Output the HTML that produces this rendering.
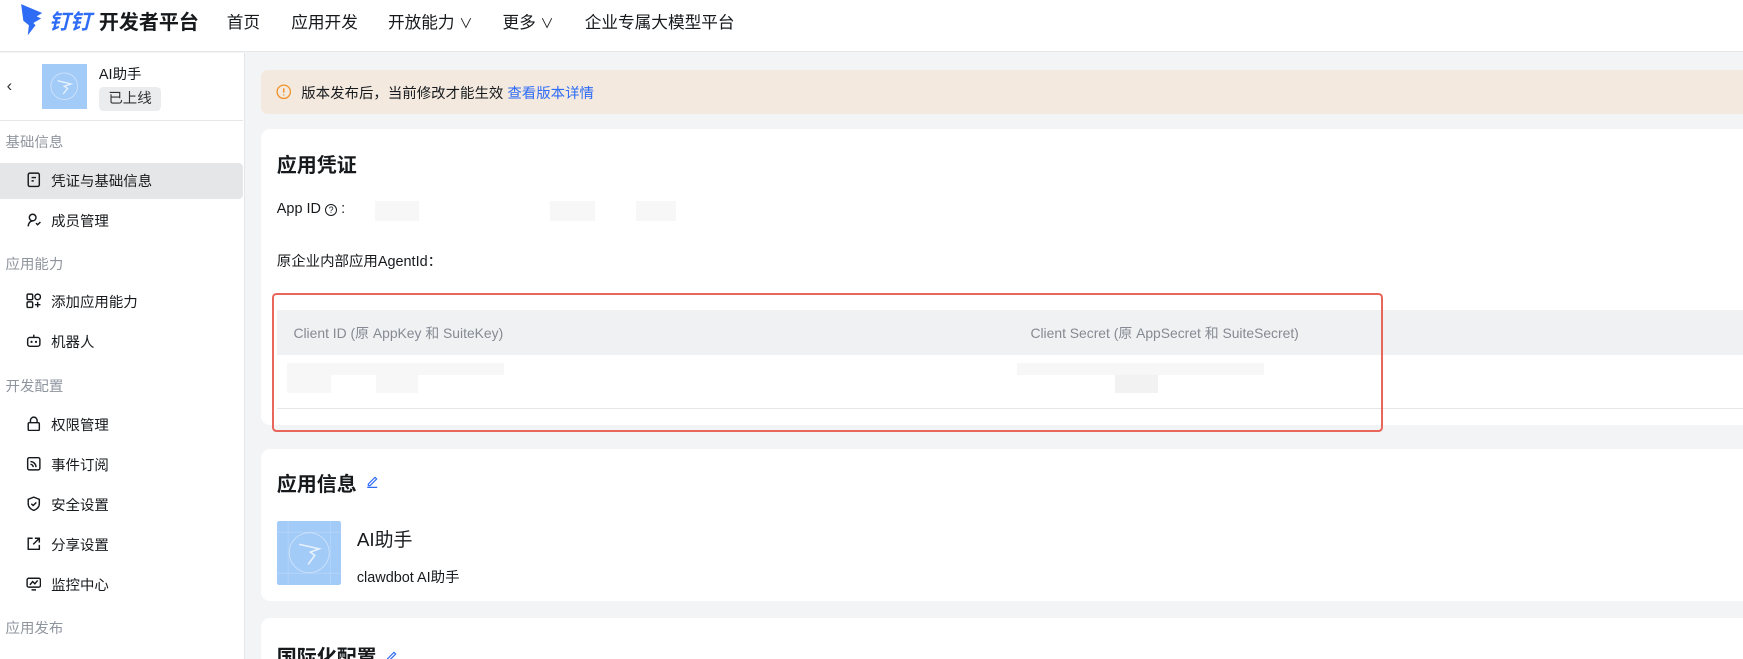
<!DOCTYPE html>
<html><head><meta charset="utf-8"><style>
*{box-sizing:border-box;margin:0;padding:0}
html,body{width:1743px;height:659px;overflow:hidden;background:#f3f4f6}
#w{width:1568px;height:593px;zoom:1.1116;position:relative;font-family:"Liberation Sans","Noto Sans CJK SC",sans-serif;color:#171a1d;overflow:hidden}
.a{position:absolute;white-space:nowrap}
#hd{left:0;top:0;width:1568px;height:47px;background:#fff;border-bottom:1px solid #e5e6e8}
.nav{font-size:15px;top:8px;color:#171a1d}
#sb{left:0;top:48px;width:220px;height:545px;background:#fff;border-right:1px solid #e5e6e8}
.sec{left:5px;font-size:13px;color:#8f959e}
.it{left:46px;font-size:13px;color:#171a1d}
.ic{left:23px;width:14px;height:14px}
.card{background:#fff;border-radius:8px;left:235px;width:1340px}
.blk{background:#f7f7f8}
</style></head><body><div id="w">
<div id="hd" class="a">
<svg class="a" style="left:18px;top:3px" width="22" height="30" viewBox="0 0 22 30"><path d="M1 1 L20 9 L15 12 L19 14 L12 18 L14 20 L7 29 L8 20 L3 16 Z" fill="#2f6cf6"/></svg>
<div class="a" style="left:44px;top:5px;font-size:19px;font-weight:bold;color:#2f6cf6;font-style:italic">钉钉</div>
<div class="a" style="left:89px;top:5px;font-size:18px;font-weight:bold">开发者平台</div>
<div class="a nav" style="left:204px">首页</div>
<div class="a nav" style="left:262px">应用开发</div>
<div class="a nav" style="left:349px">开放能力 <span style="font-size:12px">∨</span></div>
<div class="a nav" style="left:452px">更多 <span style="font-size:12px">∨</span></div>
<div class="a nav" style="left:526px">企业专属大模型平台</div>
</div>
<div id="sb" class="a">
<div class="a" style="left:6px;top:20px;font-size:15px;color:#333">‹</div>
<div class="a" style="left:38px;top:10px;width:40px;height:40px;background:#a3cbf7"><svg width="40" height="40"><circle cx="20" cy="20" r="12" fill="none" stroke="#cfe3fb" stroke-width="0.8"/><path d="M14 15 L26 18 L20 20 L23 22 L19 27" fill="none" stroke="#e8f2fd" stroke-width="1.2"/></svg></div>
<div class="a" style="left:89px;top:9px;font-size:13px">AI助手</div>
<div class="a" style="left:89px;top:30px;width:56px;height:22px;background:#ebecee;border-radius:4px;font-size:13px;line-height:22px;text-align:center;color:#333">已上线</div>
<div class="a" style="left:0;top:60px;width:219px;height:1px;background:#e5e6e8"></div>
<div class="a sec" style="top:70px">基础信息</div>
<div class="a" style="left:0;top:99px;width:219px;height:32px;background:#e5e6e8;border-radius:0 4px 4px 0"></div>
<svg class="a ic" style="top:107px" viewBox="0 0 14 14"><rect x="2" y="1" width="10" height="12" rx="1.5" fill="none" stroke="#171a1d" stroke-width="1.3"/><path d="M5 5h4M5 8h2" stroke="#171a1d" stroke-width="1.3"/></svg>
<div class="a it" style="top:105px">凭证与基础信息</div>
<svg class="a ic" style="top:143px" viewBox="0 0 14 14"><circle cx="6" cy="5" r="3" fill="none" stroke="#171a1d" stroke-width="1.3"/><path d="M2 13c0-3 2-5 4-5M9 10l1.5 1.5L13 9" fill="none" stroke="#171a1d" stroke-width="1.3"/></svg>
<div class="a it" style="top:141px">成员管理</div>
<div class="a sec" style="top:180px">应用能力</div>
<svg class="a ic" style="top:216px" viewBox="0 0 14 14"><rect x="1" y="1" width="5" height="5" rx="1" fill="none" stroke="#171a1d" stroke-width="1.3"/><rect x="8" y="1" width="5" height="5" rx="2.5" fill="none" stroke="#171a1d" stroke-width="1.3"/><rect x="1" y="8" width="5" height="5" rx="1" fill="none" stroke="#171a1d" stroke-width="1.3"/><path d="M10.5 8v5M8 10.5h5" stroke="#171a1d" stroke-width="1.3"/></svg>
<div class="a it" style="top:214px">添加应用能力</div>
<svg class="a ic" style="top:252px" viewBox="0 0 14 14"><rect x="1.5" y="4" width="11" height="8" rx="2" fill="none" stroke="#171a1d" stroke-width="1.3"/><path d="M7 4V1.5" stroke="#171a1d" stroke-width="1.3"/><circle cx="5" cy="8" r="1" fill="#171a1d"/><circle cx="9" cy="8" r="1" fill="#171a1d"/></svg>
<div class="a it" style="top:250px">机器人</div>
<div class="a sec" style="top:289px">开发配置</div>
<svg class="a ic" style="top:326px" viewBox="0 0 14 14"><rect x="2" y="6" width="10" height="7" rx="1" fill="none" stroke="#171a1d" stroke-width="1.3"/><path d="M4 6V4a3 3 0 0 1 6 0v2" fill="none" stroke="#171a1d" stroke-width="1.3"/></svg>
<div class="a it" style="top:324px">权限管理</div>
<svg class="a ic" style="top:362px" viewBox="0 0 14 14"><rect x="1.5" y="1.5" width="11" height="11" rx="1.5" fill="none" stroke="#171a1d" stroke-width="1.3"/><path d="M4 5a5 5 0 0 1 5 5M4 7.5a2.5 2.5 0 0 1 2.5 2.5" fill="none" stroke="#171a1d" stroke-width="1.3"/></svg>
<div class="a it" style="top:360px">事件订阅</div>
<svg class="a ic" style="top:398px" viewBox="0 0 14 14"><path d="M7 1L12 3v4c0 3-2.5 5-5 6-2.5-1-5-3-5-6V3z" fill="none" stroke="#171a1d" stroke-width="1.3"/><path d="M4.8 7l1.6 1.6L9.3 5.8" fill="none" stroke="#171a1d" stroke-width="1.3"/></svg>
<div class="a it" style="top:396px">安全设置</div>
<svg class="a ic" style="top:434px" viewBox="0 0 14 14"><path d="M6 2H2v10h10V8M8 2h4v4M12 2L6.5 7.5" fill="none" stroke="#171a1d" stroke-width="1.3"/></svg>
<div class="a it" style="top:432px">分享设置</div>
<svg class="a ic" style="top:470px" viewBox="0 0 14 14"><rect x="1" y="2" width="12" height="8" rx="1.5" fill="none" stroke="#171a1d" stroke-width="1.3"/><path d="M3.5 8l2.5-3 2 2 2.5-3M5 12.5h4" fill="none" stroke="#171a1d" stroke-width="1.3"/></svg>
<div class="a it" style="top:468px">监控中心</div>
<div class="a sec" style="top:507px">应用发布</div>
</div>
<div class="a" style="left:235px;top:63px;width:1340px;height:40px;background:#f3e9df;border-radius:6px"></div>
<svg class="a" style="left:248px;top:76px" width="14" height="14" viewBox="0 0 14 14"><circle cx="7" cy="7" r="6" fill="none" stroke="#f0922a" stroke-width="1.2"/><path d="M7 3.8v4M7 9.3v1" stroke="#f0922a" stroke-width="1.3"/></svg>
<div class="a" style="left:271px;top:74px;font-size:13px">版本发布后，当前修改才能生效 <span style="color:#2f6cf6">查看版本详情</span></div>
<div class="a card" style="top:116px;height:266px"></div>
<div class="a" style="left:249px;top:134px;font-size:18px;font-weight:bold">应用凭证</div>
<div class="a" style="left:249px;top:181px;font-size:13px">App ID <span style="display:inline-block;width:11px;height:11px;border:1px solid #171a1d;border-radius:50%;font-size:8px;line-height:9px;text-align:center;vertical-align:0">?</span> :</div>
<div class="a blk" style="left:337px;top:181px;width:40px;height:18px"></div>
<div class="a blk" style="left:495px;top:181px;width:40px;height:18px"></div>
<div class="a blk" style="left:572px;top:181px;width:36px;height:18px"></div>
<div class="a" style="left:249px;top:225px;font-size:13px">原企业内部应用AgentId：</div>
<div class="a" style="left:249px;top:279px;width:1326px;height:40px;background:#f0f1f3"></div>
<div class="a" style="left:264px;top:291px;font-size:12.5px;color:#858a92">Client ID (原 AppKey 和 SuiteKey)</div>
<div class="a" style="left:927px;top:291px;font-size:12.5px;color:#858a92">Client Secret (原 AppSecret 和 SuiteSecret)</div>
<div class="a blk" style="left:258px;top:327px;width:195px;height:10px"></div>
<div class="a blk" style="left:258px;top:337px;width:40px;height:17px"></div>
<div class="a blk" style="left:338px;top:337px;width:38px;height:17px"></div>
<div class="a blk" style="left:915px;top:327px;width:222px;height:10px"></div>
<div class="a blk" style="left:1003px;top:337px;width:39px;height:17px;background:#f2f2f3"></div>
<div class="a" style="left:249px;top:367px;width:1326px;height:1px;background:#e5e6e8"></div>
<div class="a" style="left:245px;top:264px;width:999px;height:125px;border:2px solid #e8665a;border-radius:4px"></div>
<div class="a card" style="top:404px;height:137px"></div>
<div class="a" style="left:249px;top:421px;font-size:18px;font-weight:bold">应用信息</div>
<svg class="a" style="left:328px;top:426px" width="13" height="13" viewBox="0 0 13 13"><path d="M3 9l6-6 1.5 1.5-6 6H3zM2 12h9" fill="none" stroke="#2f6cf6" stroke-width="1.1"/></svg>
<div class="a" style="left:249px;top:469px;width:58px;height:57px;background:#a3cbf7;border-radius:2px"><svg width="58" height="57"><path d="M0 10h58M0 47h58M10 0v57M48 0v57" stroke="#b8d7fa" stroke-width="0.6"/><circle cx="29" cy="28.5" r="18" fill="none" stroke="#cfe3fb" stroke-width="0.8"/><path d="M20 21 L38 25 L30 28 L34 31 L28 39" fill="none" stroke="#e8f2fd" stroke-width="1.4"/></svg></div>
<div class="a" style="left:321px;top:472px;font-size:17px">AI助手</div>
<div class="a" style="left:321px;top:509px;font-size:13px">clawdbot AI助手</div>
<div class="a card" style="top:556px;height:60px"></div>
<div class="a" style="left:249px;top:577px;font-size:18px;font-weight:bold">国际化配置</div>
<svg class="a" style="left:345px;top:584px" width="13" height="13" viewBox="0 0 13 13"><path d="M3 9l6-6 1.5 1.5-6 6H3z" fill="none" stroke="#2f6cf6" stroke-width="1.1"/></svg>
</div></body></html>
